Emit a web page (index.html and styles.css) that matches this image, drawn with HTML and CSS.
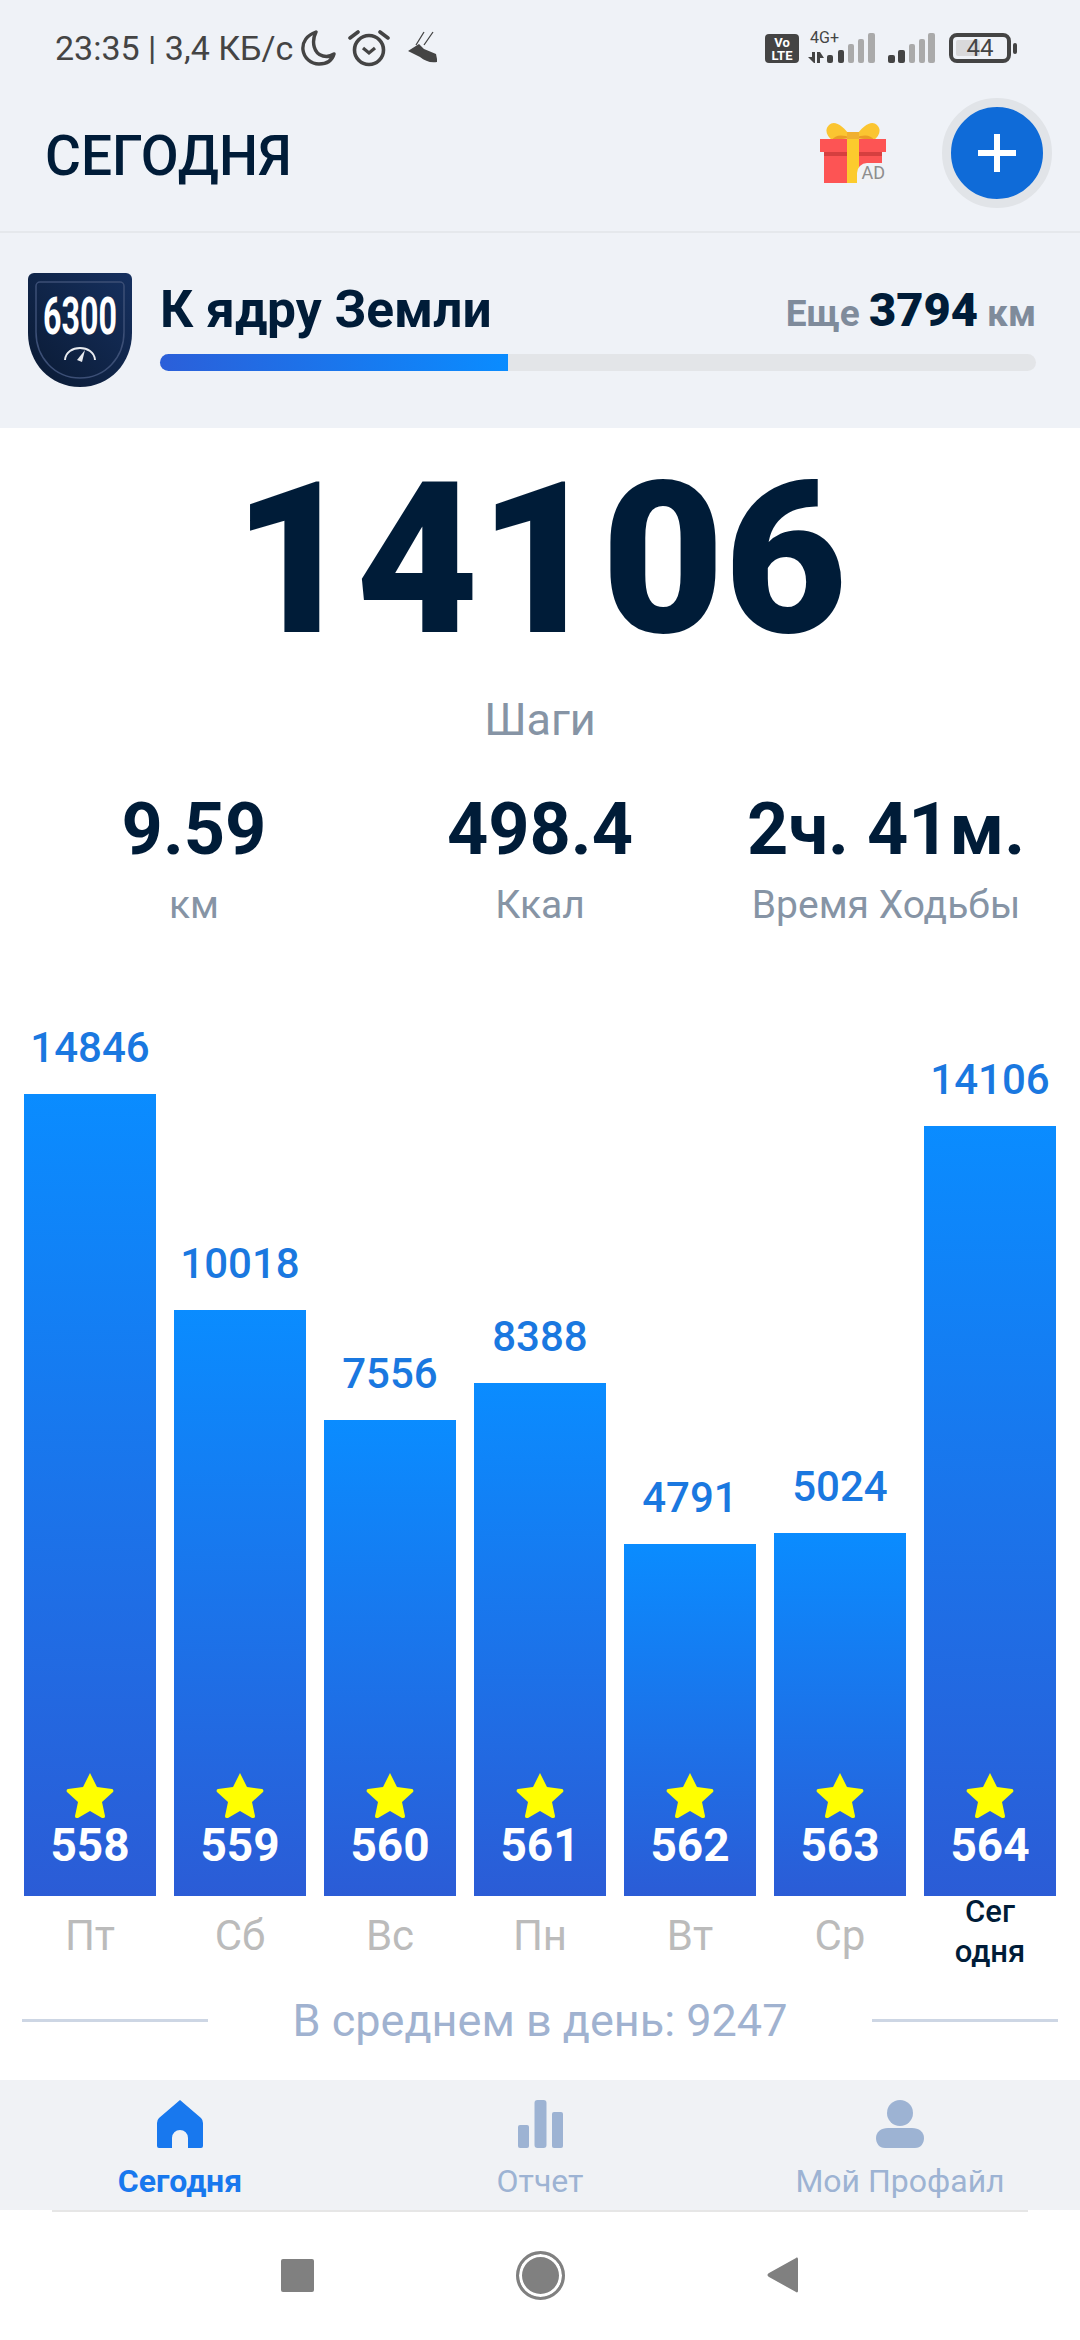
FILE: index.html
```html
<!DOCTYPE html>
<html>
<head lang="ru">
    <meta charset="UTF-8">
    <title>Шаги</title>
    <link rel="stylesheet" href="styles.css">
</head>
<body>
<div id="status">
    <div class="status-left">
        <span>23:35 | 3,4 КБ/с</span>
        <svg class="st-moon" viewBox="0 0 36 38"><path d="M16 3C7 6 2 13 3 21c1 8 8 14 16 14 7 0 13-3 15-10-3 2-7 3-11 2C14 25 11 13 16 3z" fill="none" stroke="#444" stroke-width="3.4" stroke-linejoin="round"/></svg>
        <svg class="st-alarm" viewBox="0 0 42 38"><circle cx="21" cy="21" r="14.5" fill="none" stroke="#444" stroke-width="3.6"/><path d="M15 19l6 5 6-5" fill="none" stroke="#444" stroke-width="3.2"/><path d="M2 9l8-6M40 9l-8-6" stroke="#444" stroke-width="3.6" stroke-linecap="round"/></svg>
        <svg class="st-shoe" viewBox="0 0 30 36"><path d="M8 15L16 2M16 15L25 2" stroke="#444" stroke-width="1.3" fill="none"/><path d="M0 21L11 14l5 5 12 5 1 5v3c-7 1-12-1-17-5z" fill="#444"/></svg>
    </div>
    <div class="status-right">
        <div class="volte">Vo<br>LTE</div>
        <div class="net">
            <span class="net-label">4G+</span>
            <svg class="sig1" viewBox="0 0 67 30"><path d="M0 24h4v-5h3v11H6zM9 19h3l4 6h-4v5H9z" fill="#444"/><rect x="19" y="22" width="6" height="8" rx="2" fill="#444"/><rect x="30" y="17" width="6" height="13" rx="2" fill="#444"/><rect x="40" y="11" width="6" height="19" rx="2" fill="#aaa"/><rect x="50" y="6" width="6" height="24" rx="2" fill="#aaa"/><rect x="60" y="0" width="7" height="30" rx="2" fill="#aaa"/></svg>
        </div>
        <svg class="sig3" viewBox="0 0 47 30"><rect x="0" y="22" width="7" height="8" rx="2" fill="#444"/><rect x="10" y="17" width="7" height="13" rx="2" fill="#444"/><rect x="21" y="11" width="6" height="19" rx="2" fill="#aaa"/><rect x="31" y="6" width="6" height="24" rx="2" fill="#aaa"/><rect x="40" y="0" width="7" height="30" rx="2" fill="#aaa"/></svg>
        <div class="battery"><span class="battery-fill"></span><span class="battery-num">44</span></div>
        <span class="battery-tip"></span>
    </div>
</div>

<div id="header">
    <div class="title">СЕГОДНЯ</div>
    <div class="gift">
        <svg viewBox="0 0 66 61" width="66" height="61">
            <path d="M32 16C22 2 14-2 9 3 4 8 7 14 12 18z" fill="#fbc531"/>
            <path d="M34 16C44 2 52-2 57 3c5 5 2 11-3 15z" fill="#fbc531"/>
            <path d="M12 18c3-5 10-6 19-2zM54 18c-3-5-10-6-19-2z" fill="#ea9c25"/>
            <rect x="27" y="10" width="12" height="8" fill="#f0b030"/>
            <rect x="4" y="29" width="58" height="32" fill="#fd5454"/>
            <rect x="0" y="17" width="66" height="13" fill="#fd5454"/>
            <rect x="4" y="30" width="58" height="4" fill="#d63f3f"/>
            <rect x="27" y="17" width="12" height="44" fill="#fccb2d"/>
        </svg>
        <span class="ad">AD</span>
    </div>
    <div class="add"><span class="add-h"></span><span class="add-v"></span></div>
</div>

<div id="banner">
    <div class="badge">
        <svg viewBox="0 0 104 114" width="104" height="114">
            <defs>
                <linearGradient id="shield" x1="1" y1="0" x2="0" y2="1">
                    <stop offset="0" stop-color="#16305f"/>
                    <stop offset="1" stop-color="#0a1a33"/>
                </linearGradient>
            </defs>
            <path d="M6 0h92a6 6 0 0 1 6 6v54c0 30-22 54-52 54S0 90 0 60V6a6 6 0 0 1 6-6z" fill="url(#shield)"/>
            <path d="M12 9h80a4 4 0 0 1 4 4v46c0 26-19 46-44 46S8 85 8 59V13a4 4 0 0 1 4-4z" fill="none" stroke="#3c4f76" stroke-width="1.5"/>
            <path d="M37 87c1-16 29-16 30 0" fill="none" stroke="#e8ebf0" stroke-width="2"/>
            <path d="M49 87l8-10-3 12z" fill="#e8ebf0"/>
        </svg>
        <span class="badge-num">6300</span>
    </div>
    <div class="goal">
        <div class="goal-top">
            <div class="goal-name">К ядру Земли</div>
            <div class="goal-left">Еще <b>3794</b> км</div>
        </div>
        <div class="track"><div class="fill"></div></div>
    </div>
</div>

<div id="main">
    <div class="steps">14106</div>
    <div class="steps-label">Шаги</div>
    <div class="stats">
        <div class="stat"><div class="stat-val">9.59</div><div class="stat-label">км</div></div>
        <div class="stat"><div class="stat-val">498.4</div><div class="stat-label">Ккал</div></div>
        <div class="stat"><div class="stat-val">2ч. 41м.</div><div class="stat-label">Время Ходьбы</div></div>
    </div>

    <div class="chart">
        <div class="col">
            <div class="col-num">14846</div>
            <div class="bar" style="height:802px"><svg class="star" viewBox="0 0 48 46"><use href="#star"/></svg><div class="bar-num">558</div></div>
            <div class="day">Пт</div>
        </div>
        <div class="col">
            <div class="col-num">10018</div>
            <div class="bar" style="height:586px"><svg class="star" viewBox="0 0 48 46"><use href="#star"/></svg><div class="bar-num">559</div></div>
            <div class="day">Сб</div>
        </div>
        <div class="col">
            <div class="col-num">7556</div>
            <div class="bar" style="height:476px"><svg class="star" viewBox="0 0 48 46"><use href="#star"/></svg><div class="bar-num">560</div></div>
            <div class="day">Вс</div>
        </div>
        <div class="col">
            <div class="col-num">8388</div>
            <div class="bar" style="height:513px"><svg class="star" viewBox="0 0 48 46"><use href="#star"/></svg><div class="bar-num">561</div></div>
            <div class="day">Пн</div>
        </div>
        <div class="col">
            <div class="col-num">4791</div>
            <div class="bar" style="height:352px"><svg class="star" viewBox="0 0 48 46"><use href="#star"/></svg><div class="bar-num">562</div></div>
            <div class="day">Вт</div>
        </div>
        <div class="col">
            <div class="col-num">5024</div>
            <div class="bar" style="height:363px"><svg class="star" viewBox="0 0 48 46"><use href="#star"/></svg><div class="bar-num">563</div></div>
            <div class="day">Ср</div>
        </div>
        <div class="col">
            <div class="col-num">14106</div>
            <div class="bar" style="height:770px"><svg class="star" viewBox="0 0 48 46"><use href="#star"/></svg><div class="bar-num">564</div></div>
            <div class="day today">Сег<br>одня</div>
        </div>
    </div>

    <div class="avg">
        <span class="avg-line"></span>
        <span class="avg-text">В среднем в день: 9247</span>
        <span class="avg-line"></span>
    </div>
</div>

<div id="tabs">
    <div class="tab active">
        <svg viewBox="0 0 46 48" width="46" height="48"><path d="M23 0L44 18Q46 20 46 23V46Q46 48 44 48H31V38A8 8 0 0 0 15 38V48H2Q0 48 0 46V23Q0 20 2 18Z" fill="#1878ee"/></svg>
        <div class="tab-label">Сегодня</div>
    </div>
    <div class="tab">
        <svg viewBox="0 0 45 48" width="45" height="48"><rect x="0" y="25" width="11" height="23" rx="2" fill="#9db3d3"/><rect x="16.5" y="0" width="12" height="48" rx="3" fill="#9db3d3"/><rect x="34" y="12" width="11" height="36" rx="2" fill="#9db3d3"/></svg>
        <div class="tab-label">Отчет</div>
    </div>
    <div class="tab">
        <svg viewBox="0 0 48 48" width="48" height="48"><ellipse cx="24" cy="13" rx="13" ry="13" fill="#9db3d3"/><path d="M12 28h24c7 0 12 4 12 10 0 5-3 10-9 10H9c-6 0-9-5-9-10 0-6 5-10 12-10z" fill="#9db3d3"/></svg>
        <div class="tab-label">Мой Профайл</div>
    </div>
</div>

<div id="sysnav">
    <div class="sys-btn"><span class="sys-square"></span></div>
    <div class="sys-btn"><span class="sys-circle"></span></div>
    <div class="sys-btn"><svg viewBox="0 0 32 36" width="32" height="36"><path d="M31 2v32c0 1-1 2-2 1L2 20c-2-1-2-3 0-4L29 1c1-1 2 0 2 1z" fill="#808080"/></svg></div>
</div>

<svg class="defs" width="0" height="0"><defs><path id="star" d="M24 1l7 14 15 2c1 0 2 2 1 3L36 30l3 14c0 2-1 2-3 2l-12-7-12 7c-2 0-3 0-3-2l3-14L1 20c-1-1 0-3 1-3l15-2z" fill="#ffff00"/></defs></svg>
</body>
</html>
```

FILE: styles.css
```css
*{
    margin: 0;
    padding: 0;
    box-sizing: border-box;
}
body{
    width: 1080px;
    height: 2340px;
    overflow: hidden;
    background: #ffffff;
    font-family: Roboto, "Noto Sans", sans-serif;
    color: #001c38;
}
.defs{
    display: block;
    height: 0;
}

/* status bar */
#status{
    height: 96px;
    padding: 0 63px 0 55px;
    background: #eff2f7;
    display: flex;
    justify-content: space-between;
    align-items: center;
    color: #444444;
    font-size: 34px;
}
.status-left{
    display: flex;
    align-items: center;
}
.st-moon{
    width: 36px;
    height: 38px;
    margin-left: 7px;
}
.st-alarm{
    width: 42px;
    height: 38px;
    margin-left: 12px;
}
.st-shoe{
    width: 30px;
    height: 36px;
    margin-left: 18px;
}
.status-right{
    display: flex;
    align-items: center;
}
.volte{
    width: 34px;
    height: 29px;
    background: #444444;
    border-radius: 4px;
    color: #ffffff;
    font-size: 13px;
    font-weight: 700;
    line-height: 13px;
    text-align: center;
    padding-top: 2px;
}
.net{
    width: 67px;
    height: 30px;
    margin-left: 9px;
    position: relative;
}
.net-label{
    position: absolute;
    left: 2px;
    top: -3px;
    font-size: 16px;
    line-height: 16px;
}
.sig1{
    width: 67px;
    height: 30px;
    display: block;
}
.sig3{
    width: 47px;
    height: 30px;
    margin-left: 13px;
}
.battery{
    width: 62px;
    height: 30px;
    margin-left: 14px;
    border: 4px solid #444444;
    border-radius: 8px;
    position: relative;
}
.battery-fill{
    position: absolute;
    left: 3px;
    top: 3px;
    bottom: 3px;
    width: 24px;
    background: #d9d9db;
    border-radius: 2px;
}
.battery-num{
    position: absolute;
    left: 0;
    right: 0;
    top: -2px;
    text-align: center;
    font-size: 24px;
    line-height: 26px;
}
.battery-tip{
    width: 4px;
    height: 11px;
    margin-left: 2px;
    background: #444444;
    border-radius: 2px;
}

/* header */
#header{
    height: 137px;
    padding: 0 28px 22px 45px;
    background: #eff2f7;
    border-bottom: 2px solid #e5e8ec;
    display: flex;
    align-items: center;
}
.title{
    flex: 1;
    margin-top: 6px;
    font-size: 55px;
    font-weight: 500;
    color: #001c38;
}
.gift{
    width: 66px;
    height: 61px;
    margin-right: 56px;
    position: relative;
}
.gift svg{
    display: block;
}
.ad{
    position: absolute;
    right: 0;
    bottom: 0;
    padding: 0 1px 0 4px;
    background: #f0f2f5;
    border-radius: 10px 0 0 0;
    color: #8d8d8d;
    font-size: 18px;
    line-height: 20px;
}
.add{
    width: 110px;
    height: 110px;
    border: 9px solid #e1e4e8;
    border-radius: 50%;
    background: #0f6bd8;
    position: relative;
}
.add-h,.add-v{
    position: absolute;
    background: #ffffff;
}
.add-h{
    left: 27px;
    top: 43px;
    width: 38px;
    height: 6px;
}
.add-v{
    left: 43px;
    top: 27px;
    width: 6px;
    height: 38px;
}

/* goal banner */
#banner{
    height: 195px;
    padding: 0 44px 2px 28px;
    background: #eff2f7;
    display: flex;
    align-items: center;
}
.badge{
    width: 104px;
    height: 114px;
    flex: none;
    position: relative;
}
.badge svg{
    display: block;
}
.badge-num{
    position: absolute;
    left: 50%;
    top: 20px;
    transform: translateX(-50%) scaleX(.62);
    font-size: 52px;
    font-weight: 700;
    line-height: 48px;
    color: #ffffff;
}
.goal{
    flex: 1;
    margin-left: 28px;
    margin-bottom: 10px;
}
.goal-top{
    display: flex;
    justify-content: space-between;
    align-items: center;
    height: 62px;
}
.goal-name{
    font-size: 51.5px;
    font-weight: 700;
}
.goal-left{
    font-size: 37px;
    font-weight: 700;
    color: #7f8b9b;
}
.goal-left b{
    font-size: 47px;
    color: #001c38;
}
.track{
    height: 17px;
    margin-top: 13px;
    background: #e3e5e8;
    border-radius: 9px;
}
.fill{
    width: 348px;
    height: 17px;
    border-radius: 9px 0 0 9px;
    background: linear-gradient(90deg, #2b5fd9, #0a8cff);
}

/* today */
.steps{
    height: 264px;
    font-size: 212px;
    font-weight: 900;
    line-height: 264px;
    text-align: center;
    color: #001c38;
}
.steps-label{
    height: 56px;
    font-size: 45px;
    line-height: 56px;
    text-align: center;
    color: #8694a5;
}
.stats{
    margin-top: 43px;
    padding: 0 21px;
    display: grid;
    grid-template-columns: repeat(3, 346px);
}
.stat{
    text-align: center;
}
.stat-val{
    font-size: 72px;
    font-weight: 700;
    line-height: 78px;
}
.stat-label{
    margin-top: 14px;
    font-size: 39px;
    line-height: 44px;
    color: #8694a5;
}

/* week chart */
.chart{
    height: 1037px;
    padding: 0 24px;
    display: flex;
    gap: 18px;
    align-items: flex-end;
}
.col{
    width: 132px;
    position: relative;
    padding-bottom: 68px;
}
.col-num{
    height: 70px;
    text-align: center;
    font-size: 42px;
    font-weight: 500;
    line-height: 48px;
    color: #1a78e0;
}
.bar{
    background: linear-gradient(180deg, #0a8cff, #2b5cd6);
    display: flex;
    flex-direction: column;
    justify-content: flex-end;
    align-items: center;
    padding-bottom: 29px;
}
.star{
    width: 48px;
    height: 46px;
}
.bar-num{
    height: 44px;
    margin-top: 5px;
    color: #ffffff;
    font-size: 46px;
    font-weight: 700;
    line-height: 44px;
}
.day{
    position: absolute;
    left: 0;
    right: 0;
    top: 100%;
    margin-top: -68px;
    padding-top: 16px;
    text-align: center;
    font-size: 42px;
    line-height: 48px;
    color: #bbbbbb;
}
.day.today{
    margin-top: -72px;
    padding-top: 0;
    font-size: 31px;
    font-weight: 500;
    line-height: 40px;
    color: #001c38;
}

.avg{
    height: 116px;
    padding: 0 22px 4px;
    display: flex;
    align-items: center;
}
.avg-line{
    width: 186px;
    height: 3px;
    background: #cdd6e4;
}
.avg-text{
    flex: 1;
    text-align: center;
    font-size: 45px;
    color: #a0b2d0;
}

/* bottom tabs */
#tabs{
    height: 130px;
    background: #f0f2f5;
    display: grid;
    grid-template-columns: repeat(3, 360px);
    position: relative;
    padding-top: 20px;
}
#tabs::after{
    content: "";
    position: absolute;
    left: 52px;
    right: 52px;
    bottom: -2px;
    height: 2px;
    background: #e6e6e6;
}
.tab{
    display: flex;
    flex-direction: column;
    align-items: center;
}
.tab-label{
    margin-top: 15px;
    font-size: 32px;
    line-height: 36px;
    color: #9db3d3;
}
.tab.active .tab-label{
    font-weight: 700;
    color: #1878ee;
}

/* android nav */
#sysnav{
    height: 130px;
    background: #ffffff;
    display: grid;
    grid-template-columns: 243px 243px 243px;
    justify-content: center;
}
.sys-btn{
    display: flex;
    justify-content: center;
    align-items: center;
}
.sys-square{
    width: 33px;
    height: 33px;
    background: #808080;
    border-radius: 2px;
}
.sys-circle{
    width: 49px;
    height: 49px;
    border-radius: 50%;
    background: #808080;
    border: 3px solid #808080;
    box-shadow: inset 0 0 0 3px #ffffff;
}
```
